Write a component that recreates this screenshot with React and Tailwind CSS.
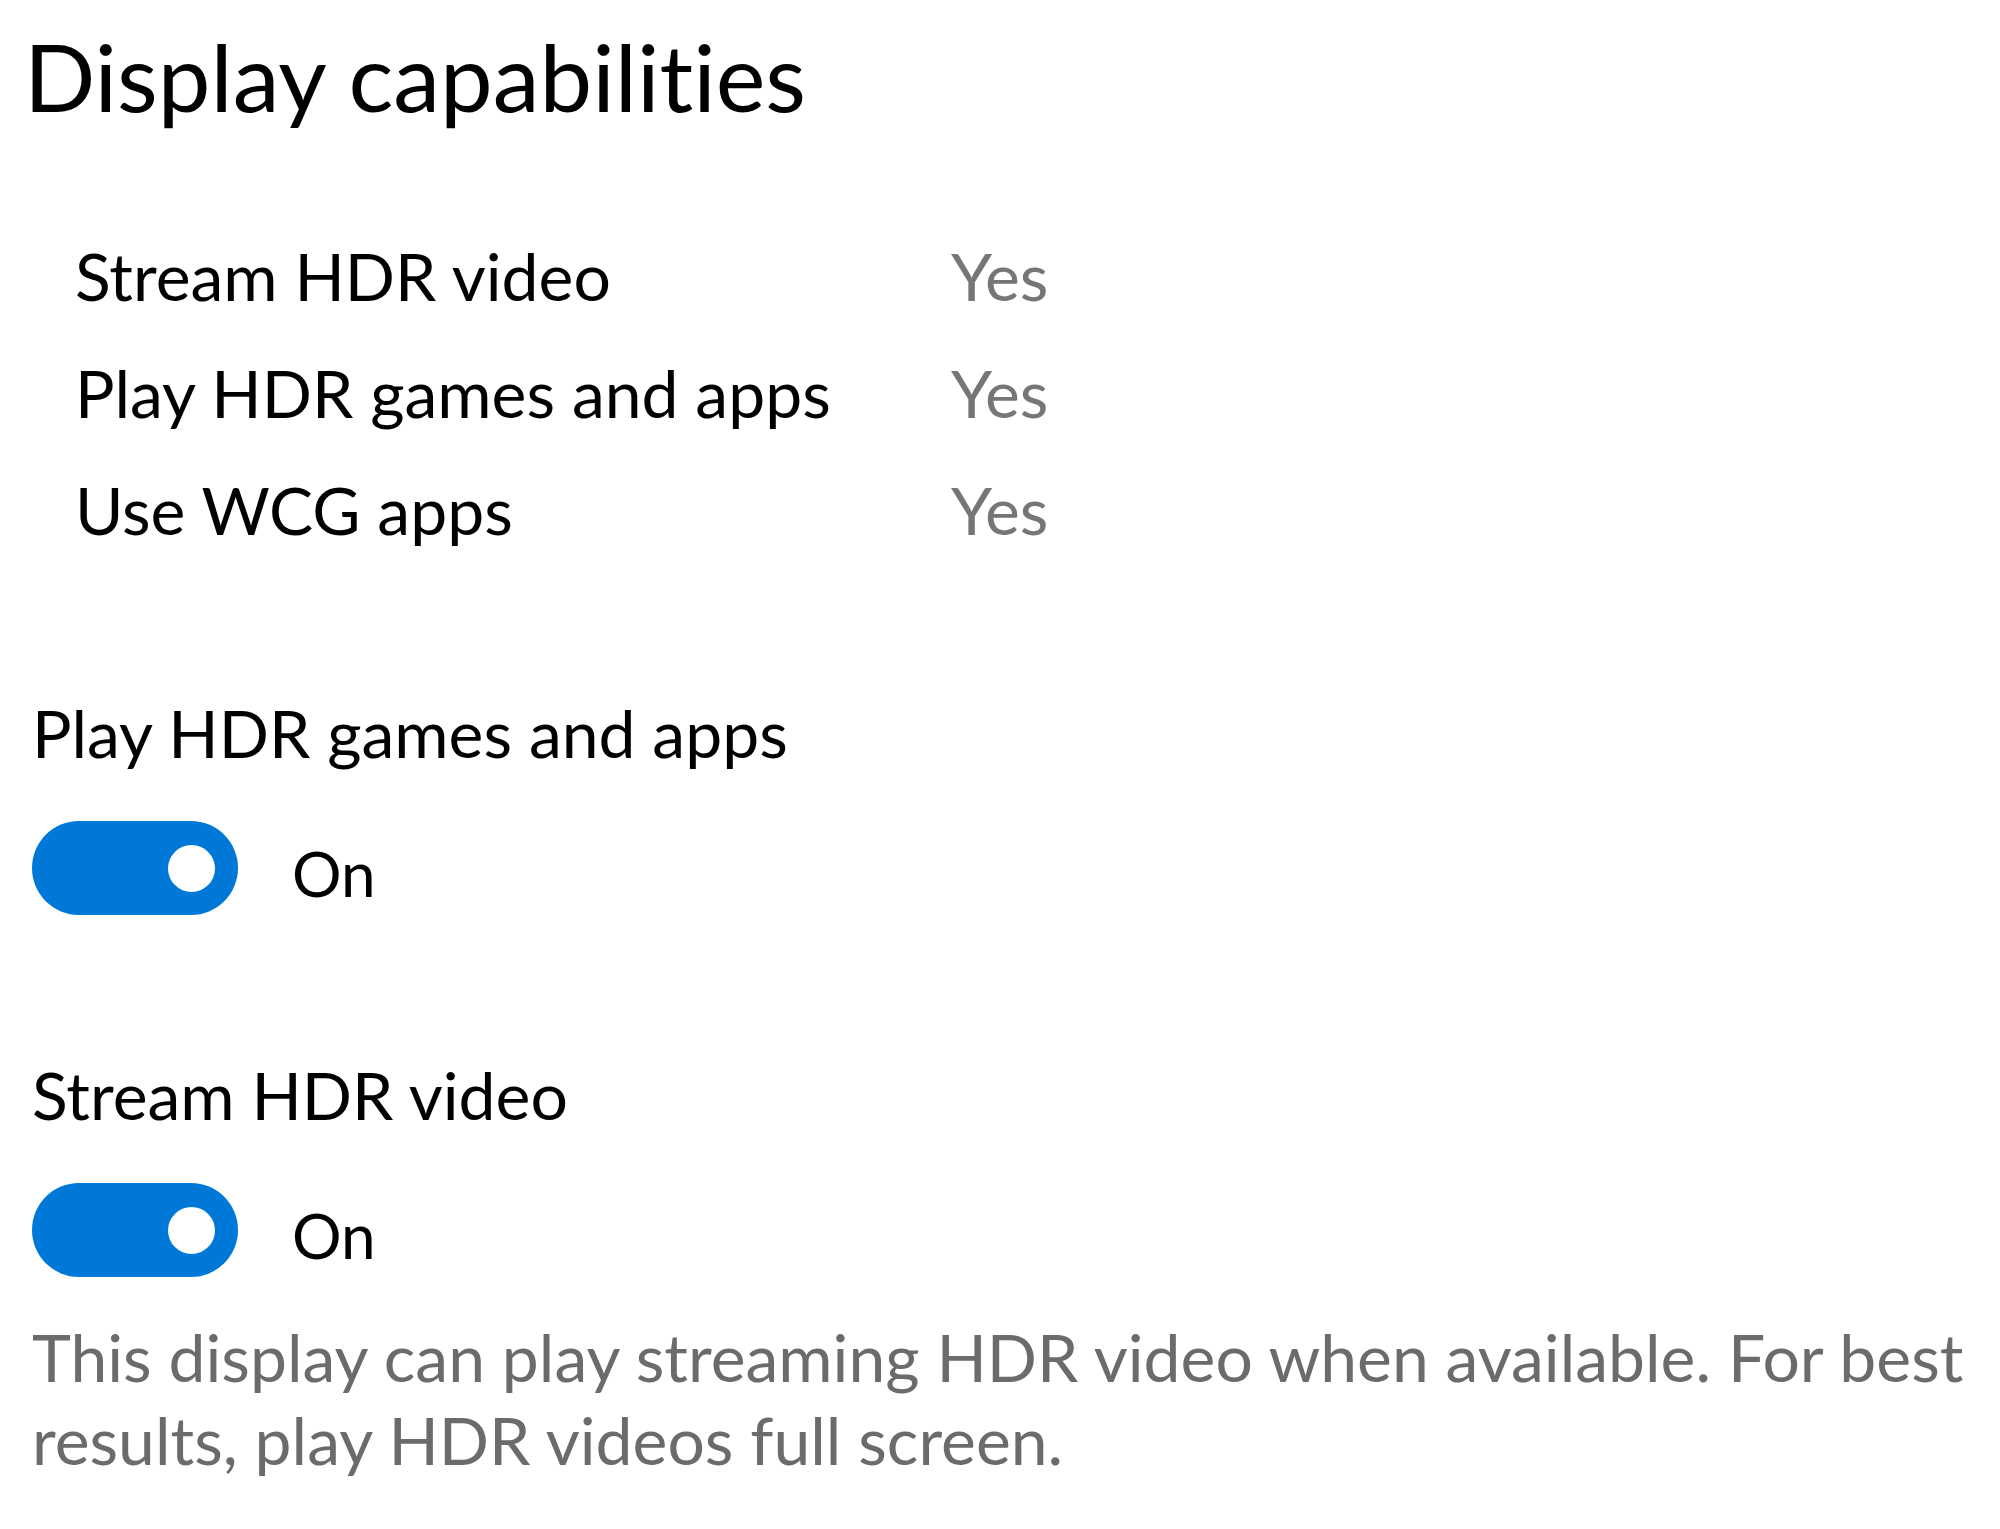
import { useState } from "react";

const CAPS = [
  { label: "Stream HDR video", value: "Yes" },
  { label: "Play HDR games and apps", value: "Yes" },
  { label: "Use WCG apps", value: "Yes" },
];

function Toggle({ on, onChange }) {
  return (
    <div className="flex items-start">
      <button
        onClick={() => onChange(!on)}
        className={`flex items-center h-[94px] w-[206px] rounded-full px-[23px] ${
          on ? "justify-end bg-[#0078d7]" : "justify-start bg-white border-4 border-[#333]"
        }`}
      >
        <span className={`block w-[47px] h-[47px] rounded-full ${on ? "bg-white" : "bg-[#333]"}`} />
      </button>
      <span className="ml-[54px] mt-[15px] text-[62px] leading-[74px] text-black">{on ? "On" : "Off"}</span>
    </div>
  );
}

export default function App() {
  const [games, setGames] = useState(true);
  const [stream, setStream] = useState(true);

  return (
    <div
      className="min-h-screen w-full bg-white text-black [font-variant-ligatures:none]"
      style={{ fontFamily: "Lato, 'Open Sans', sans-serif" }}
    >
      <h1 className="pt-[18px] pl-[24px] text-[94px] leading-[115px] font-normal">Display capabilities</h1>

      {/* capability list */}
      <div className="mt-[82px] pl-[75px]">
        {CAPS.map(c => (
          <div key={c.label} className="flex h-[117px] items-center text-[66px] leading-[80px]">
            <span className="w-[876px] pt-[4px]">{c.label}</span>
            <span className="pt-[4px] text-[#767676]">{c.value}</span>
          </div>
        ))}
      </div>

      <div className="pl-[32px]">
        <div className="mt-[127px] text-[66px] leading-[80px]">Play HDR games and apps</div>
        <div className="mt-[48px]">
          <Toggle on={games} onChange={setGames} />
        </div>

        <div className="mt-[140px] text-[66px] leading-[80px]">Stream HDR video</div>
        <div className="mt-[48px]">
          <Toggle on={stream} onChange={setStream} />
        </div>

        <p className="mt-[38px] text-[66px] leading-[83px] text-[#6b6b6b]">
          This display can play streaming HDR video when available. For best
          <br />
          results, play HDR videos full screen.
        </p>
      </div>
    </div>
  );
}
